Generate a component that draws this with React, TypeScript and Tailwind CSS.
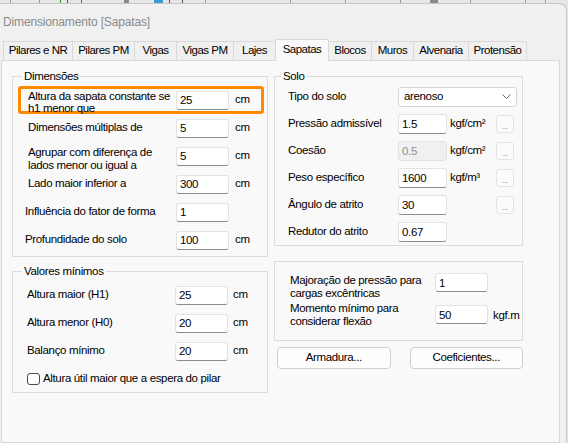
import React from "react"

const tabs: [string, string][] = [
  ["Pilares e NR", "w-[70px] border-l"],
  ["Pilares PM", "w-[62px]"],
  ["Vigas", "w-[42px]"],
  ["Vigas PM", "w-[57px]"],
  ["Lajes", "w-[42px]"],
  ["Sapatas", "selected"],
  ["Blocos", "w-[43px]"],
  ["Muros", "w-[42px]"],
  ["Alvenaria", "w-[55px]"],
  ["Protensão", "w-[58px]"],
]

function Field({ value, className = "", disabled = false }: { value: string; className?: string; disabled?: boolean }) {
  return (
    <input
      type="text"
      readOnly
      disabled={disabled}
      defaultValue={value}
      className={`h-[19px] px-[3px] rounded-[3px] border outline-none text-[11.5px] tracking-[-0.35px] ${
        disabled
          ? "bg-[#f0f0f0] border-[#e3e3e3] text-[#8f8f8f]"
          : "bg-white border-[#e3e3e3] border-b-[#8c8c8c] text-black"
      } ${className}`}
    />
  )
}

function DotsButton() {
  return (
    <div className="w-[18px] h-[18px] rounded-[3px] border border-[#e3e3e3] bg-[#fbfbfb] flex items-end justify-center text-[9px] leading-[12px] text-[#a0a0a0]">
      ...
    </div>
  )
}

function Group({ title, legendPos = "left-[9px]", className = "", children }: { title?: string; legendPos?: string; className?: string; children: React.ReactNode }) {
  return (
    <div className={`relative border border-[#dcdcdc] ${className}`}>
      {title && (
        <span className={`absolute -top-[7px] px-[2px] bg-[#f9f9f9] leading-[13px] ${legendPos}`}>{title}</span>
      )}
      {children}
    </div>
  )
}

export default function App() {
  return (
    <div className="w-[568px] h-[443px] overflow-hidden bg-[#e4e4e4] flex flex-col font-['Liberation_Sans',Arial,sans-serif] text-[11.5px] tracking-[-0.35px] text-black">
      {/* bits of the window behind */}
      <svg width="568" height="3" className="block shrink-0">
        <rect width="568" height="3" fill="#e6e6e6" />
        <rect x="10" y="0" width="1" height="3" fill="#9a9a9a" />
        <rect x="39" y="0" width="1" height="3" fill="#9a9a9a" />
        <rect x="60" y="0" width="1" height="3" fill="#2e8b3a" />
        <rect x="67" y="0" width="1" height="3" fill="#555" />
        <rect x="81" y="0" width="1" height="3" fill="#2e8b3a" />
        <rect x="124" y="0" width="5" height="3" fill="#8a8a8a" />
        <rect x="154" y="0" width="9" height="3" fill="#3a9ad9" />
        <rect x="169" y="0" width="1" height="3" fill="#555" />
        <rect x="182" y="0" width="1" height="3" fill="#555" />
        <rect x="205" y="0" width="1" height="3" fill="#9a9a9a" />
        <rect x="290" y="0" width="1" height="3" fill="#9a9a9a" />
        <rect x="345" y="0" width="1" height="3" fill="#9a9a9a" />
        <rect x="400" y="0" width="1" height="3" fill="#9a9a9a" />
        <rect x="430" y="0" width="8" height="3" fill="#8a8a8a" />
        <rect x="470" y="0" width="1" height="3" fill="#9a9a9a" />
        <rect x="525" y="0" width="1" height="3" fill="#9a9a9a" />
        <rect x="545" y="0" width="1" height="3" fill="#9a9a9a" />
      </svg>

      <div className="flex-1 flex flex-col bg-[#f0f0f0] mr-[1px] border-t border-r border-[#c8c8c8] rounded-tr-[8px] overflow-hidden">
        {/* Title */}
        <div className="h-[35px] shrink-0 flex items-center pl-[3px] text-[12px] tracking-[-0.15px] text-[#8a8a8a]">
          Dimensionamento [Sapatas]
        </div>

        {/* Tabs */}
        <div className="relative z-10 h-[21px] shrink-0 flex items-end pl-[3px] text-[11.5px] tracking-[-0.5px]">
          {tabs.map(([label, cls]) =>
            cls === "selected" ? (
              <div
                key={label}
                className="w-[54px] h-[22px] -mb-px -ml-px border border-b-0 border-[#d9d9d9] bg-[#f9f9f9] flex items-center justify-center pb-[1px]"
              >
                {label}
              </div>
            ) : (
              <div
                key={label}
                className={`h-[19px] border-t border-r border-[#d9d9d9] bg-[#f0f0f0] flex items-center justify-center ${cls}`}
              >
                {label}
              </div>
            )
          )}
        </div>

        {/* Panel */}
        <div className="flex-1 w-[559px] ml-[1px] border border-[#d9d9d9] bg-[#f9f9f9] flex gap-[6px] pl-[10px] pt-[15px]">
          {/* Left column */}
          <div className="w-[256px] flex flex-col">
            <Group title="Dimensões" className="pt-[9px] pb-[2px]">
              <div className="ml-[5px] mr-[3px] h-[28px] border-[3px] border-[#ff8a00] rounded-[3px] flex items-center pl-[7px]">
                <div className="w-[148px] leading-[12px] pt-[3px]">
                  Altura da sapata constante se
                  <br />
                  h1 menor que
                </div>
                <Field value="25" className="w-[53px]" />
                <span className="ml-[6px]">cm</span>
              </div>
              <div className="h-[28px] flex items-center pl-[15px]">
                <div className="w-[148px]">Dimensões múltiplas de</div>
                <Field value="5" className="w-[53px]" />
                <span className="ml-[6px]">cm</span>
              </div>
              <div className="h-[28px] flex items-center pl-[15px]">
                <div className="w-[148px] leading-[13px] pt-[6px]">
                  Agrupar com diferença de
                  <br />
                  lados menor ou igual a
                </div>
                <Field value="5" className="w-[53px]" />
                <span className="ml-[6px]">cm</span>
              </div>
              <div className="h-[28px] flex items-center pl-[15px]">
                <div className="w-[148px]">Lado maior inferior a</div>
                <Field value="300" className="w-[53px]" />
                <span className="ml-[6px]">cm</span>
              </div>
              <div className="h-[28px] flex items-center pl-[12px]">
                <div className="w-[151px]">Influência do fator de forma</div>
                <Field value="1" className="w-[53px]" />
              </div>
              <div className="h-[28px] flex items-center pl-[12px]">
                <div className="w-[151px]">Profundidade do solo</div>
                <Field value="100" className="w-[53px]" />
                <span className="ml-[6px]">cm</span>
              </div>
            </Group>

            <Group title="Valores mínimos" className="mt-[14px] pt-[9px]">
              <div className="h-[28px] flex items-center pl-[14px]">
                <div className="w-[148px]">Altura maior (H1)</div>
                <Field value="25" className="w-[53px]" />
                <span className="ml-[5px]">cm</span>
              </div>
              <div className="h-[28px] flex items-center pl-[14px]">
                <div className="w-[148px]">Altura menor (H0)</div>
                <Field value="20" className="w-[53px]" />
                <span className="ml-[5px]">cm</span>
              </div>
              <div className="h-[28px] flex items-center pl-[14px]">
                <div className="w-[148px]">Balanço mínimo</div>
                <Field value="20" className="w-[53px]" />
                <span className="ml-[5px]">cm</span>
              </div>
              <div className="h-[27px] flex items-center pl-[14px]">
                <div className="w-[13px] h-[12px] rounded-[3px] border border-[#4a4a4a] bg-white" />
                <span className="ml-[3px]">Altura útil maior que a espera do pilar</span>
              </div>
            </Group>
          </div>

          {/* Right column */}
          <div className="w-[249px] flex flex-col">
            <Group title="Solo" legendPos="left-[6px]" className="pt-[6px]">
              <div className="h-[27px] flex items-center pl-[13px]">
                <div className="w-[110px]">Tipo do solo</div>
                <div className="w-[119px] h-[20px] rounded-[3px] border border-[#d5d5d5] bg-white flex items-center justify-between pl-[5px] pr-[5px]">
                  <span>arenoso</span>
                  <svg width="9" height="5" viewBox="0 0 9 5">
                    <path d="M0.5 0.5 L4.5 4.5 L8.5 0.5" fill="none" stroke="#6a6a6a" strokeWidth="1" />
                  </svg>
                </div>
              </div>
              <div className="h-[27px] flex items-center pl-[13px]">
                <div className="w-[110px]">Pressão admissível</div>
                <Field value="1.5" className="w-[49px] h-[20px]" />
                <span className="ml-[3px] w-[46px]">kgf/cm²</span>
                <DotsButton />
              </div>
              <div className="h-[27px] flex items-center pl-[13px]">
                <div className="w-[110px]">Coesão</div>
                <Field value="0.5" disabled className="w-[49px] h-[20px]" />
                <span className="ml-[3px] w-[46px]">kgf/cm²</span>
                <DotsButton />
              </div>
              <div className="h-[27px] flex items-center pl-[13px]">
                <div className="w-[110px]">Peso específico</div>
                <Field value="1600" className="w-[49px] h-[20px]" />
                <span className="ml-[3px] w-[46px]">kgf/m³</span>
                <DotsButton />
              </div>
              <div className="h-[27px] flex items-center pl-[13px]">
                <div className="w-[110px]">Ângulo de atrito</div>
                <Field value="30" className="w-[49px] h-[20px]" />
                <span className="ml-[3px] w-[46px]" />
                <DotsButton />
              </div>
              <div className="h-[27px] flex items-center pl-[13px]">
                <div className="w-[110px]">Redutor do atrito</div>
                <Field value="0.67" className="w-[49px] h-[20px]" />
              </div>
            </Group>

            <Group className="mt-[15px] pt-[6px] pb-[11px]">
              <div className="h-[32px] flex items-start pl-[15px]">
                <div className="w-[145px] leading-[13px] mt-[6px]">
                  Majoração de pressão para
                  <br />
                  cargas excêntricas
                </div>
                <Field value="1" className="w-[53px] mt-[5px]" />
              </div>
              <div className="h-[29px] flex items-start pl-[15px]">
                <div className="w-[145px] leading-[13px] mt-[2px]">
                  Momento mínimo para
                  <br />
                  considerar flexão
                </div>
                <Field value="50" className="w-[53px] mt-[5px]" />
                <span className="ml-[5px] mt-[7px]">kgf.m</span>
              </div>
            </Group>

            <div className="mt-[6px] flex gap-[19px] pl-[3px]">
              <button type="button" className="w-[114px] h-[22px] rounded-[4px] border border-[#d0d0d0] bg-[#fdfdfd]">
                Armadura...
              </button>
              <button type="button" className="w-[114px] h-[22px] rounded-[4px] border border-[#d0d0d0] bg-[#fdfdfd]">
                Coeficientes...
              </button>
            </div>
          </div>
        </div>
      </div>
    </div>
  )
}
